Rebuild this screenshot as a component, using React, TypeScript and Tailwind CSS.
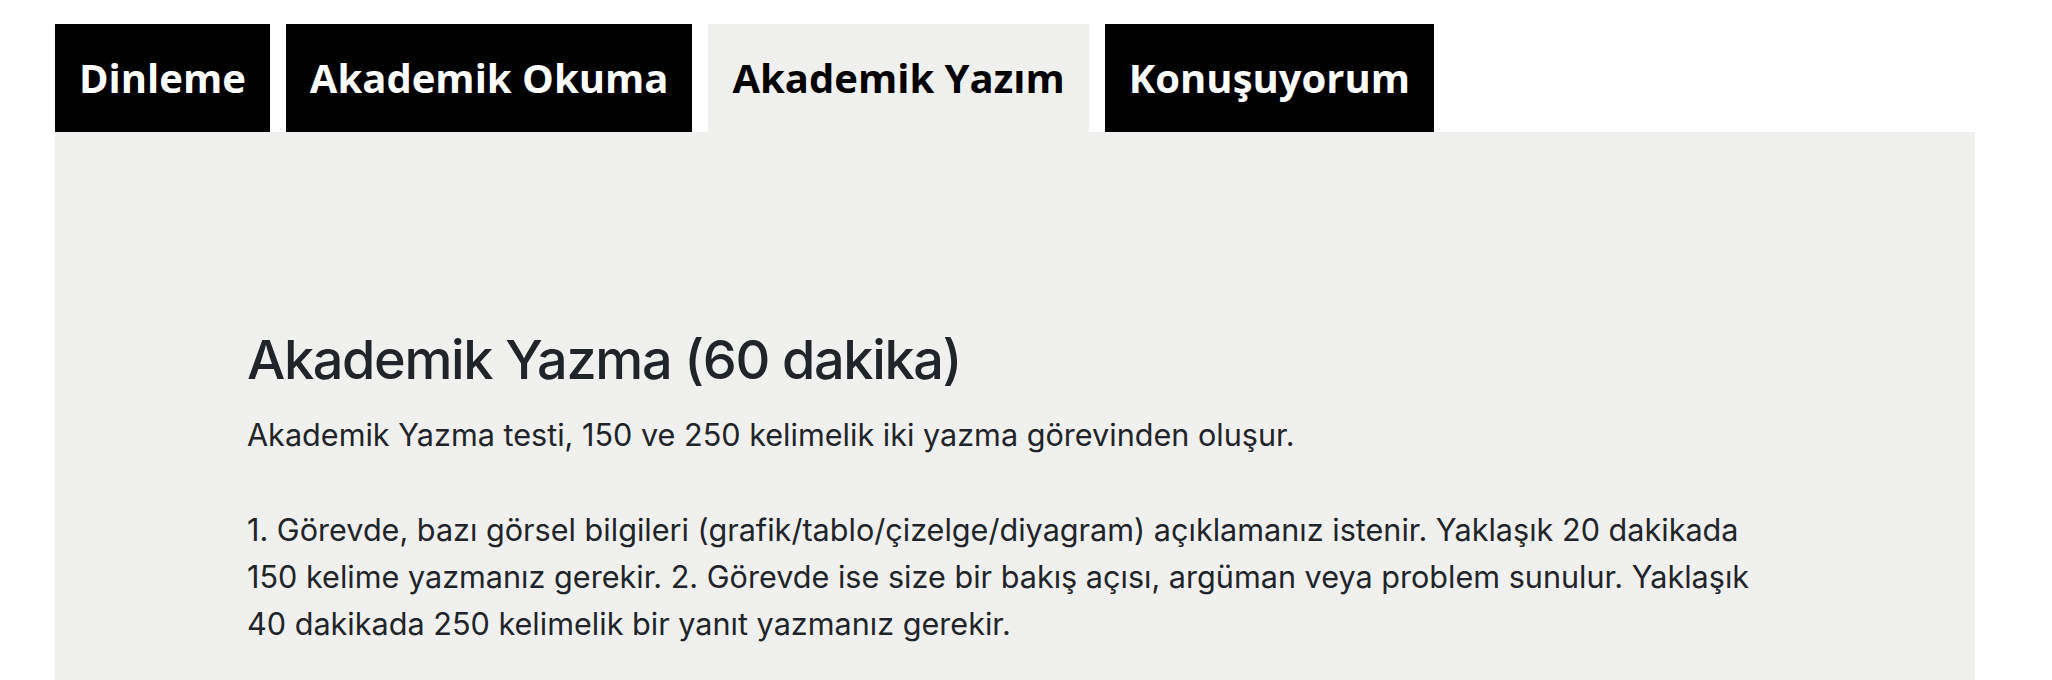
const tabs = ["Dinleme", "Akademik Okuma", "Akademik Yazım", "Konuşuyorum"];

export default function App() {
  const active = "Akademik Yazım";

  return (
    <div className="min-h-screen bg-white pt-6 px-[55px] overflow-hidden">
      <div className="flex gap-4 font-['Open_Sans',sans-serif]">
        {tabs.map((tab) => (
          <button
            key={tab}
            className={
              tab === active
                ? "h-[108px] px-6 bg-[#f0f0ee] text-black text-[40px] font-bold"
                : "h-[108px] px-6 bg-black text-white text-[40px] font-bold"
            }
          >
            {tab}
          </button>
        ))}
      </div>
      <div className="w-[1920px] bg-[#f0f0ee] px-48 pt-[196px] pb-48 text-[#212529] font-['Inter',sans-serif]">
        <h2 className="text-[54px] leading-[1.2] font-medium tracking-tight mb-[18px]">Akademik Yazma (60 dakika)</h2>
        <p className="text-[30.6px] leading-[47px] mb-[48px]">
          Akademik Yazma testi, 150 ve 250 kelimelik iki yazma görevinden oluşur.
        </p>
        <p className="text-[30.6px] leading-[47px]">
          1. Görevde, bazı görsel bilgileri (grafik/tablo/çizelge/diyagram) açıklamanız istenir. Yaklaşık 20 dakikada
          150 kelime yazmanız gerekir. 2. Görevde ise size bir bakış açısı, argüman veya problem sunulur. Yaklaşık 40
          dakikada 250 kelimelik bir yanıt yazmanız gerekir.
        </p>
      </div>
    </div>
  );
}
